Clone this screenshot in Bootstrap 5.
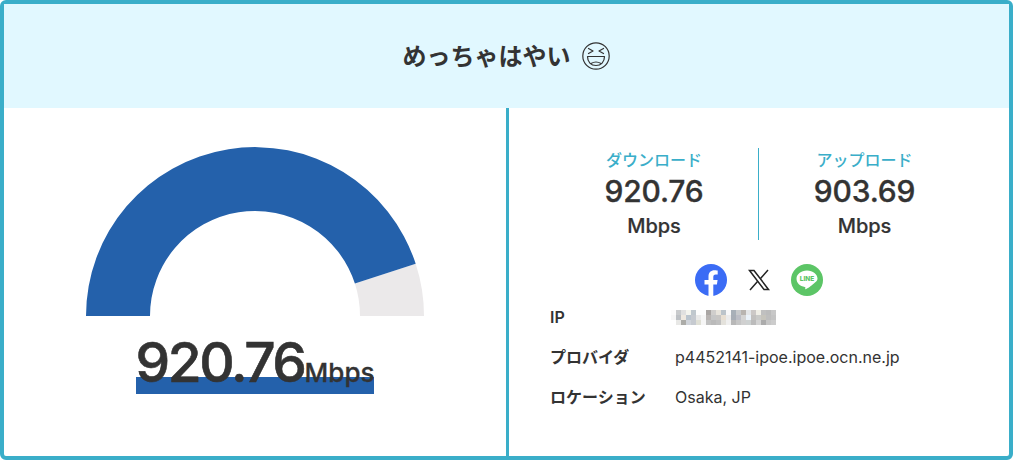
<!DOCTYPE html>
<html lang="ja">
<head>
    <meta charset="UTF-8">
    <meta name="viewport" content="width=device-width, initial-scale=1.0">
    <title>スピードテスト</title>
    <link rel="stylesheet" href="https://cdn.jsdelivr.net/npm/bootstrap@5.3.0/dist/css/bootstrap.min.css">
    <style>
        html, body {
            height: 100%;
        }

        body {
            font-family: Inter, "Noto Sans CJK JP", sans-serif;
            color: #333;
            overflow: hidden;
        }

        .result-box {
            height: 460px;
            border: 4px solid #3aaec9;
            border-radius: 6px;
        }

        .result-head {
            height: 104px;
            background-color: #e1f8ff;
            font-size: 24px;
            font-weight: 700;
            gap: 11px;
            padding-top: 1px;
        }

        .head-emoji {
            margin-top: -2px;
            margin-right: 1px;
        }

        .gauge-side {
            width: 505px;
            border-right: 3px solid #3aaec9;
            padding-top: 39px;
        }

        .gauge-svg {
            display: block;
            width: 338px;
            height: 169px;
        }

        .gauge-num {
            margin-top: 14px;
            height: 64px;
            line-height: 64px;
            font-size: 55px;
            font-weight: 500;
            letter-spacing: -2.400px;
            -webkit-text-stroke: .6px #333;
            background: linear-gradient(#2461ab, #2461ab) no-repeat 0 47px / 100% 17px;
            white-space: nowrap;
        }

        .gauge-num span {
            font-size: 26px;
            letter-spacing: 0;
            -webkit-text-stroke: .3px #333;
        }

        .info-side {
            padding-top: 40px;
        }

        .stat-row {
            width: 420px;
            height: 92px;
            margin-right: 2px;
        }

        .stat-cell {
            width: 50%;
            line-height: 1;
            padding-left: 2px;
        }

        .stat-cell + .stat-cell {
            border-left: 1px solid #3aaec9;
        }

        .stat-label {
            font-size: 16px;
            font-weight: 500;
            color: #3aaec9;
            line-height: 24px;
        }

        .stat-value {
            font-size: 30px;
            font-weight: 500;
            letter-spacing: -.2px;
            -webkit-text-stroke: .3px #333;
            line-height: 38px;
        }

        .stat-unit {
            font-size: 20px;
            font-weight: 500;
            letter-spacing: -.1px;
            -webkit-text-stroke: .2px #333;
            line-height: 32px;
        }

        .share-row {
            gap: 20px;
            margin-top: 24px;
            height: 32px;
        }

        .info-table {
            align-self: flex-start;
            margin-left: 41px;
            margin-top: 1px;
            font-size: 16px;
        }

        .info-line {
            height: 40px;
        }

        .info-key {
            width: 125px;
            font-weight: 600;
        }

        .ip-mosaic {
            margin-left: -4px;
        }
    </style>
</head>
<body>
    <div class="result-box d-flex flex-column">
        <div class="result-head d-flex align-items-center justify-content-center">
            <span>めっちゃはやい</span>
            <svg class="head-emoji" width="28" height="28" viewBox="0 0 28 28" fill="none" stroke="#333" stroke-width="1.200" stroke-linecap="round" stroke-linejoin="round">
                <circle cx="14" cy="14" r="13.200"/>
                <path d="M6.500 6.500l4.500 2.500-4.500 2.500M21.500 6.500l-4.500 2.500 4.500 2.500"/>
                <path d="M5.500 14.500h17c0 5.500-3.500 9-8.500 9s-8.500-3.500-8.500-9z"/>
                <path d="M9 21.500c3-1.800 7-1.800 10 0"/>
            </svg>
        </div>
        <div class="d-flex flex-grow-1">
            <div class="gauge-side d-flex flex-column align-items-center">
                <svg class="gauge-svg" viewBox="0 0 338 169">
                    <path fill="#ebe9ea" d="M329.700 116.800A169 169 0 0 1 338 169H274A105 105 0 0 0 268.900 136.600Z"/>
                    <path fill="#2461ab" d="M0 169A169 169 0 0 1 329.700 116.800L268.900 136.600A105 105 0 0 0 64 169Z"/>
                </svg>
                <div class="gauge-num">920.76<span>Mbps</span></div>
            </div>
            <div class="info-side flex-grow-1 d-flex flex-column align-items-center">
                <div class="stat-row d-flex">
                    <div class="stat-cell text-center">
                        <div class="stat-label">ダウンロード</div>
                        <div class="stat-value">920.76</div>
                        <div class="stat-unit">Mbps</div>
                    </div>
                    <div class="stat-cell text-center">
                        <div class="stat-label">アップロード</div>
                        <div class="stat-value">903.69</div>
                        <div class="stat-unit">Mbps</div>
                    </div>
                </div>
                <div class="share-row d-flex align-items-center">
                    <svg width="32" height="32" viewBox="0 0 32 32">
                        <circle cx="16" cy="16" r="16" fill="#3b6cf5"/>
                        <path fill="#fff" d="M13.500 32V20.500H9.500V16h4v-3.500c0-4 2.400-6.200 6-6.200 1.700 0 3.200.3 3.200.3v4h-1.900c-2 0-2.500 1.200-2.500 2.400V16h4.300l-.7 4.500h-3.600V32z"/>
                    </svg>
                    <svg width="24" height="24" viewBox="0 0 24 24" fill="none" stroke="#222">
                        <path stroke-width="1.500" d="M2.500 2.500h4.500L21.500 21.500H17z"/>
                        <path stroke-width="1.500" d="M21 2 13.500 10.500M10.500 13.500 3 22"/>
                    </svg>
                    <svg width="32" height="32" viewBox="0 0 32 32">
                        <circle cx="16" cy="16" r="16" fill="#5cc566"/>
                        <path fill="#fff" d="M16 6.500c-6 0-10.500 3.700-10.500 8.300 0 4.100 3.500 7.500 8.300 8.200.6.100.6.500.5 1.100-.1.500-.2 1.500.6 1.100 1.500-.8 5.700-3.400 8-5.700 2-1.700 3.600-2.800 3.600-4.700 0-4.600-4.500-8.300-10.500-8.300z"/>
                        <text x="16" y="17.300" text-anchor="middle" font-size="6.500" font-weight="800" fill="#5cc566" font-family="Inter, sans-serif">LINE</text>
                    </svg>
                </div>
                <div class="info-table">
                    <div class="info-line d-flex align-items-center">
                        <div class="info-key">IP</div>
                        <svg class="ip-mosaic" id="ip-mosaic" width="105" height="15" viewBox="0 0 21 3" shape-rendering="crispEdges"></svg>
                    </div>
                    <div class="info-line d-flex align-items-center">
                        <div class="info-key">プロバイダ</div>
                        <div>p4452141-ipoe.ipoe.ocn.ne.jp</div>
                    </div>
                    <div class="info-line d-flex align-items-center">
                        <div class="info-key">ロケーション</div>
                        <div>Osaka, JP</div>
                    </div>
                </div>
            </div>
        </div>
    </div>
    <script src="https://cdn.jsdelivr.net/npm/bootstrap@5.3.0/dist/js/bootstrap.bundle.min.js"></script>
    <script>
        // IP is hidden behind a mosaic, one colour per block
        const mosaic = [
            ["fbfbfb", "c8cacc", "e0e0e0", "f4f4ee", "c0c8ce", "fdfdfd", "fdfdfd", "aaa6a4", "d0cecc", "e8e4dc", "bcc4ca", "f8f8f8", "a8b0b8", "c8cacc", "b8b4b0", "e4e6e8", "ccc8c6", "f0eee6", "c0c0c0", "bcbcbc", "c8c8c8"],
            ["f6f6f6", "bcc0c4", "eee8e0", "bac4ce", "c6cad0", "eaeaea", "f6f6f6", "b8b4b2", "c6c6c6", "c8c6c4", "e8dfd2", "ececec", "a8aeb6", "bcbec6", "d4d4d4", "eaf2fa", "c2c0be", "cacac8", "c6c4bc", "bebebe", "c4c4c4"],
            ["ffffff", "e8e8e6", "acaca8", "d0d4da", "c6cad0", "e0e0d6", "f6f6f6", "c0c0c0", "bababa", "c0c0c0", "e4e2dc", "f0f0f0", "b8b8b8", "c6c6c6", "d0d0d0", "ced2d2", "bcbcbc", "d4d4d4", "acacac", "c6c6c6", "cccccc"]
        ];
        const mosaicSvg = document.getElementById("ip-mosaic");
        mosaic.forEach((row, y) => {
            row.forEach((color, x) => {
                const rect = document.createElementNS("http://www.w3.org/2000/svg", "rect");
                rect.setAttribute("x", x);
                rect.setAttribute("y", y);
                rect.setAttribute("width", 1);
                rect.setAttribute("height", 1);
                rect.setAttribute("fill", "#" + color);
                mosaicSvg.appendChild(rect);
            });
        });
    </script>
</body>
</html>
